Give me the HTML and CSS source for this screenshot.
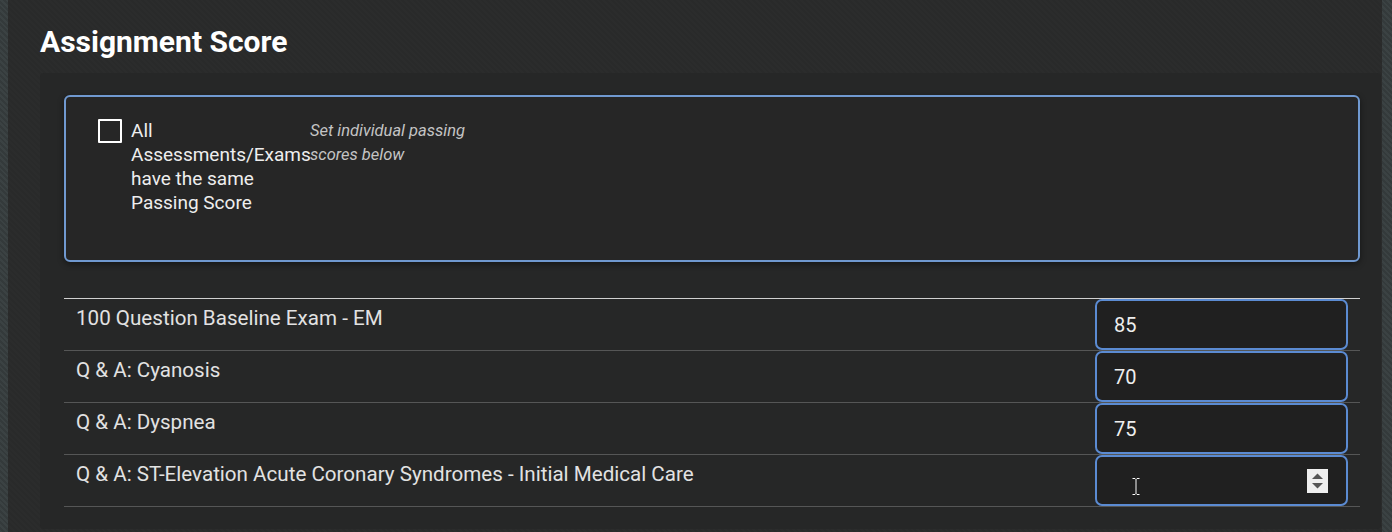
FILE: index.html
```html
<!DOCTYPE html>
<html lang="en">
<head>
<meta charset="utf-8">
<title>Assignment Score</title>
<link rel="stylesheet" href="styles.css">
</head>
<body>
<div class="page">
  <main class="main">
    <h2 class="title">Assignment Score</h2>
    <section class="card">
      <div class="same-box">
        <div class="check-row">
          <span class="checkbox"></span>
          <span class="check-label">All <span class="nowrap">Assessments/Exams</span> have the same Passing Score</span>
          <span class="hint">Set individual passing scores below</span>
        </div>
      </div>
      <div class="table">
        <div class="row">
          <div class="name">100 Question Baseline Exam - EM</div>
          <div class="field"><input class="score" type="text" value="85"></div>
        </div>
        <div class="row">
          <div class="name">Q &amp; A: Cyanosis</div>
          <div class="field"><input class="score" type="text" value="70"></div>
        </div>
        <div class="row">
          <div class="name">Q &amp; A: Dyspnea</div>
          <div class="field"><input class="score" type="text" value="75"></div>
        </div>
        <div class="row">
          <div class="name">Q &amp; A: ST-Elevation Acute Coronary Syndromes - Initial Medical Care</div>
          <div class="field">
            <input class="score" type="text" value="">
            <span class="spinner">
              <svg width="21" height="24" viewBox="0 0 21 24"><rect width="21" height="24" fill="#efefef"/><path d="M5 10 L10.5 4.5 L16 10 Z" fill="#555"/><path d="M5 14 L16 14 L10.5 19.5 Z" fill="#555"/></svg>
            </span>
            <span class="ibeam">
              <svg width="8" height="17" viewBox="0 0 8 17"><path d="M0.5 0.5 H3 L4 1.5 L5 0.5 H7.5 M4 1.5 V15.5 M0.5 16.5 H3 L4 15.5 L5 16.5 H7.5" stroke="#1a1a1a" stroke-width="2.2" fill="none"/><path d="M0.5 0.5 H3 L4 1.5 L5 0.5 H7.5 M4 1.5 V15.5 M0.5 16.5 H3 L4 15.5 L5 16.5 H7.5" stroke="#ffffff" stroke-width="1" fill="none"/></svg>
            </span>
          </div>
        </div>
      </div>
    </section>
  </main>
</div>
</body>
</html>
```
FILE: styles.css
```css
* { box-sizing: border-box; }
html, body { margin: 0; padding: 0; }
body {
  width: 1392px;
  height: 532px;
  overflow: hidden;
  font-family: Roboto, "Liberation Sans", sans-serif;
  background: repeating-linear-gradient(45deg, #3b4243 0 2px, #343a3b 2px 4px);
}
.page {
  display: flex;
  height: 532px;
}
.main {
  margin-left: 8px;
  width: 1374px;
  height: 532px;
  background: repeating-linear-gradient(45deg, #2b2c2c 0 2px, #292a2a 2px 4px);
  padding: 24px 1px 0 32px;
}
.title {
  margin: 0 0 13px 0;
  font-size: 30px;
  line-height: 36px;
  font-weight: 700;
  color: #ffffff;
}
.card {
  background: #262727;
  border-radius: 4px;
  padding: 22px 21px 22px 24px;
}
.same-box {
  background: #262626;
  border: 2px solid #7099d0;
  border-radius: 6px;
  height: 167px;
  padding: 22px 32px 0 32px;
  box-shadow: 0 2px 6px rgba(0, 0, 0, 0.45);
}
.check-row {
  display: flex;
  align-items: flex-start;
}
.checkbox {
  width: 24px;
  height: 24px;
  border: 2px solid #ffffff;
  border-radius: 1px;
  flex: none;
}
.check-label {
  margin-left: 9px;
  width: 179px;
  flex: none;
  font-size: 19px;
  line-height: 24px;
  color: #eeeeee;
  font-weight: 400;
}
.nowrap { white-space: nowrap; }
.hint {
  width: 175px;
  font-size: 16.5px;
  line-height: 24px;
  font-style: italic;
  color: #c4c4c4;
}
.table {
  margin-top: 36px;
  border-top: 1px solid #d0d0d0;
}
.row {
  display: flex;
  justify-content: space-between;
  align-items: flex-start;
  height: 52px;
  border-bottom: 1px solid #555656;
  padding: 0 12px;
}
.name {
  padding-top: 7px;
  font-size: 20.6px;
  line-height: 24px;
  color: #e2e2e2;
}
.field {
  position: relative;
  width: 253px;
  height: 51px;
}
.score {
  display: block;
  width: 253px;
  height: 51px;
  background: #202020;
  border: 2px solid #5b8bd2;
  border-radius: 7px;
  padding: 0 0 0 17px;
  font-family: Roboto, "Liberation Sans", sans-serif;
  font-size: 20px;
  color: #eeeeee;
  outline: none;
}
.spinner {
  position: absolute;
  right: 20px;
  top: 14px;
  width: 21px;
  height: 24px;
  display: block;
}
.spinner svg, .ibeam svg { display: block; }
.ibeam {
  position: absolute;
  left: 37px;
  top: 23px;
  display: block;
}
```
